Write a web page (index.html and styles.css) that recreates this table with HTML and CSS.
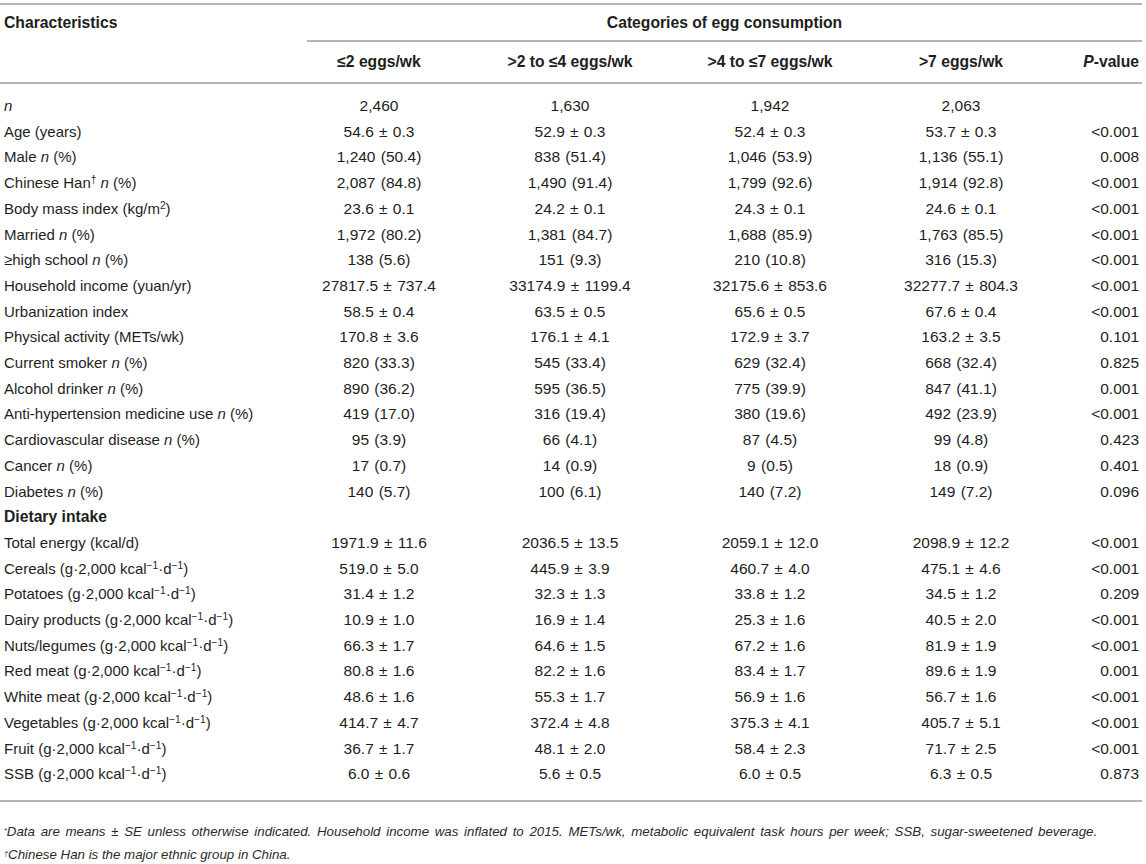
FILE: index.html
```html
<!DOCTYPE html>
<html>
<head>
<meta charset="utf-8">
<link rel="stylesheet" href="styles.css">
</head>
<body>
<div class="wrap">
<table class="tbl">
  <colgroup>
    <col class="c-label"><col class="c1"><col class="c2"><col class="c3"><col class="c4"><col class="c5">
  </colgroup>
  <thead>
    <tr class="h1">
      <th class="lab">Characteristics</th>
      <th class="cat" colspan="5"><div class="cat-in">Categories of egg consumption</div></th>
    </tr>
    <tr class="h2">
      <th></th>
      <th>≤2 eggs/wk</th>
      <th>&gt;2 to ≤4 eggs/wk</th>
      <th>&gt;4 to ≤7 eggs/wk</th>
      <th>&gt;7 eggs/wk</th>
      <th class="p"><i>P</i>-value</th>
    </tr>
  </thead>
  <tbody>
    <tr class="first"><td><i>n</i></td><td>2,460</td><td>1,630</td><td>1,942</td><td>2,063</td><td class="p"></td></tr>
    <tr><td>Age (years)</td><td>54.6 ± 0.3</td><td>52.9 ± 0.3</td><td>52.4 ± 0.3</td><td>53.7 ± 0.3</td><td class="p">&lt;0.001</td></tr>
    <tr><td>Male <i>n</i> (%)</td><td>1,240 (50.4)</td><td>838 (51.4)</td><td>1,046 (53.9)</td><td>1,136 (55.1)</td><td class="p">0.008</td></tr>
    <tr><td>Chinese Han<sup>†</sup> <i>n</i> (%)</td><td>2,087 (84.8)</td><td>1,490 (91.4)</td><td>1,799 (92.6)</td><td>1,914 (92.8)</td><td class="p">&lt;0.001</td></tr>
    <tr><td>Body mass index (kg/m<sup>2</sup>)</td><td>23.6 ± 0.1</td><td>24.2 ± 0.1</td><td>24.3 ± 0.1</td><td>24.6 ± 0.1</td><td class="p">&lt;0.001</td></tr>
    <tr><td>Married <i>n</i> (%)</td><td>1,972 (80.2)</td><td>1,381 (84.7)</td><td>1,688 (85.9)</td><td>1,763 (85.5)</td><td class="p">&lt;0.001</td></tr>
    <tr><td>≥high school <i>n</i> (%)</td><td>138 (5.6)</td><td>151 (9.3)</td><td>210 (10.8)</td><td>316 (15.3)</td><td class="p">&lt;0.001</td></tr>
    <tr><td>Household income (yuan/yr)</td><td>27817.5 ± 737.4</td><td>33174.9 ± 1199.4</td><td>32175.6 ± 853.6</td><td>32277.7 ± 804.3</td><td class="p">&lt;0.001</td></tr>
    <tr><td>Urbanization index</td><td>58.5 ± 0.4</td><td>63.5 ± 0.5</td><td>65.6 ± 0.5</td><td>67.6 ± 0.4</td><td class="p">&lt;0.001</td></tr>
    <tr><td>Physical activity (METs/wk)</td><td>170.8 ± 3.6</td><td>176.1 ± 4.1</td><td>172.9 ± 3.7</td><td>163.2 ± 3.5</td><td class="p">0.101</td></tr>
    <tr><td>Current smoker <i>n</i> (%)</td><td>820 (33.3)</td><td>545 (33.4)</td><td>629 (32.4)</td><td>668 (32.4)</td><td class="p">0.825</td></tr>
    <tr><td>Alcohol drinker <i>n</i> (%)</td><td>890 (36.2)</td><td>595 (36.5)</td><td>775 (39.9)</td><td>847 (41.1)</td><td class="p">0.001</td></tr>
    <tr><td>Anti-hypertension medicine use <i>n</i> (%)</td><td>419 (17.0)</td><td>316 (19.4)</td><td>380 (19.6)</td><td>492 (23.9)</td><td class="p">&lt;0.001</td></tr>
    <tr><td>Cardiovascular disease <i>n</i> (%)</td><td>95 (3.9)</td><td>66 (4.1)</td><td>87 (4.5)</td><td>99 (4.8)</td><td class="p">0.423</td></tr>
    <tr><td>Cancer <i>n</i> (%)</td><td>17 (0.7)</td><td>14 (0.9)</td><td>9 (0.5)</td><td>18 (0.9)</td><td class="p">0.401</td></tr>
    <tr><td>Diabetes <i>n</i> (%)</td><td>140 (5.7)</td><td>100 (6.1)</td><td>140 (7.2)</td><td>149 (7.2)</td><td class="p">0.096</td></tr>
    <tr class="section"><td colspan="6">Dietary intake</td></tr>
    <tr><td>Total energy (kcal/d)</td><td>1971.9 ± 11.6</td><td>2036.5 ± 13.5</td><td>2059.1 ± 12.0</td><td>2098.9 ± 12.2</td><td class="p">&lt;0.001</td></tr>
    <tr><td>Cereals (g·2,000 kcal<sup>−1</sup>·d<sup>−1</sup>)</td><td>519.0 ± 5.0</td><td>445.9 ± 3.9</td><td>460.7 ± 4.0</td><td>475.1 ± 4.6</td><td class="p">&lt;0.001</td></tr>
    <tr><td>Potatoes (g·2,000 kcal<sup>−1</sup>·d<sup>−1</sup>)</td><td>31.4 ± 1.2</td><td>32.3 ± 1.3</td><td>33.8 ± 1.2</td><td>34.5 ± 1.2</td><td class="p">0.209</td></tr>
    <tr><td>Dairy products (g·2,000 kcal<sup>−1</sup>·d<sup>−1</sup>)</td><td>10.9 ± 1.0</td><td>16.9 ± 1.4</td><td>25.3 ± 1.6</td><td>40.5 ± 2.0</td><td class="p">&lt;0.001</td></tr>
    <tr><td>Nuts/legumes (g·2,000 kcal<sup>−1</sup>·d<sup>−1</sup>)</td><td>66.3 ± 1.7</td><td>64.6 ± 1.5</td><td>67.2 ± 1.6</td><td>81.9 ± 1.9</td><td class="p">&lt;0.001</td></tr>
    <tr><td>Red meat (g·2,000 kcal<sup>−1</sup>·d<sup>−1</sup>)</td><td>80.8 ± 1.6</td><td>82.2 ± 1.6</td><td>83.4 ± 1.7</td><td>89.6 ± 1.9</td><td class="p">0.001</td></tr>
    <tr><td>White meat (g·2,000 kcal<sup>−1</sup>·d<sup>−1</sup>)</td><td>48.6 ± 1.6</td><td>55.3 ± 1.7</td><td>56.9 ± 1.6</td><td>56.7 ± 1.6</td><td class="p">&lt;0.001</td></tr>
    <tr><td>Vegetables (g·2,000 kcal<sup>−1</sup>·d<sup>−1</sup>)</td><td>414.7 ± 4.7</td><td>372.4 ± 4.8</td><td>375.3 ± 4.1</td><td>405.7 ± 5.1</td><td class="p">&lt;0.001</td></tr>
    <tr><td>Fruit (g·2,000 kcal<sup>−1</sup>·d<sup>−1</sup>)</td><td>36.7 ± 1.7</td><td>48.1 ± 2.0</td><td>58.4 ± 2.3</td><td>71.7 ± 2.5</td><td class="p">&lt;0.001</td></tr>
    <tr class="last"><td>SSB (g·2,000 kcal<sup>−1</sup>·d<sup>−1</sup>)</td><td>6.0 ± 0.6</td><td>5.6 ± 0.5</td><td>6.0 ± 0.5</td><td>6.3 ± 0.5</td><td class="p">0.873</td></tr>
  </tbody>
</table>
<div class="notes">
  <p class="note-wide"><sup>*</sup>Data are means ± SE unless otherwise indicated. Household income was inflated to 2015. METs/wk, metabolic equivalent task hours per week; SSB, sugar-sweetened beverage.</p>
  <p><sup>†</sup>Chinese Han is the major ethnic group in China.</p>
</div>
</div>
</body>
</html>
```
FILE: styles.css
```css
html, body {
  margin: 0;
  padding: 0;
  background: #fff;
}
body {
  font-family: "Liberation Sans", Arial, Helvetica, sans-serif;
  color: #1e1e1e;
}
.wrap {
  width: 1142px;
  padding-top: 3px;
}
.tbl {
  width: 1142px;
  border-collapse: separate;
  border-spacing: 0;
  table-layout: fixed;
  font-size: 15px;
}
.c-label { width: 283px; }
.c1 { width: 192px; }
.c2 { width: 190px; }
.c3 { width: 210px; }
.c4 { width: 172px; }
.c5 { width: 95px; }

.tbl th, .tbl td {
  padding: 0;
  text-align: center;
  white-space: nowrap;
}
.tbl th {
  font-weight: bold;
  font-size: 15.7px;
}

.h1 th {
  border-top: 2px solid #b4b4b4;
  vertical-align: top;
}
.h1 .lab {
  text-align: left;
  padding-left: 4px;
  height: 36px;
  line-height: 36px;
}
.h1 .cat {
  padding-left: 24px;
}
.cat-in {
  height: 35px;
  line-height: 36px;
  border-bottom: 2px solid #b4b4b4;
  text-align: center;
}
.h2 th {
  height: 39px;
  line-height: 40px;
  border-bottom: 2px solid #b4b4b4;
}
.tbl .p {
  text-align: right;
  padding-right: 3px;
}

.tbl td {
  height: 25.7px;
  line-height: 25.7px;
  font-size: 15.5px;
  word-spacing: 1px;
}
.tbl td:first-child {
  text-align: left;
  padding-left: 4px;
  font-size: 15px;
  word-spacing: 0;
}
.tbl tr.first td { padding-top: 9px; }
.tbl tr.last td {
  padding-bottom: 13px;
  border-bottom: 2px solid #b4b4b4;
}
.tbl tr.section td {
  font-weight: bold;
  font-size: 15.7px;
}
sup {
  font-size: 0.68em;
  line-height: 0;
  vertical-align: 0.45em;
}
.notes {
  padding-left: 4px;
  padding-top: 18px;
  font-size: 13.3px;
  font-style: italic;
  color: #2a2a2a;
}
.notes p {
  margin: 0;
  line-height: 23px;
}
.notes .note-wide {
  word-spacing: 2px;
}
.notes sup {
  font-size: 0.55em;
}
```
